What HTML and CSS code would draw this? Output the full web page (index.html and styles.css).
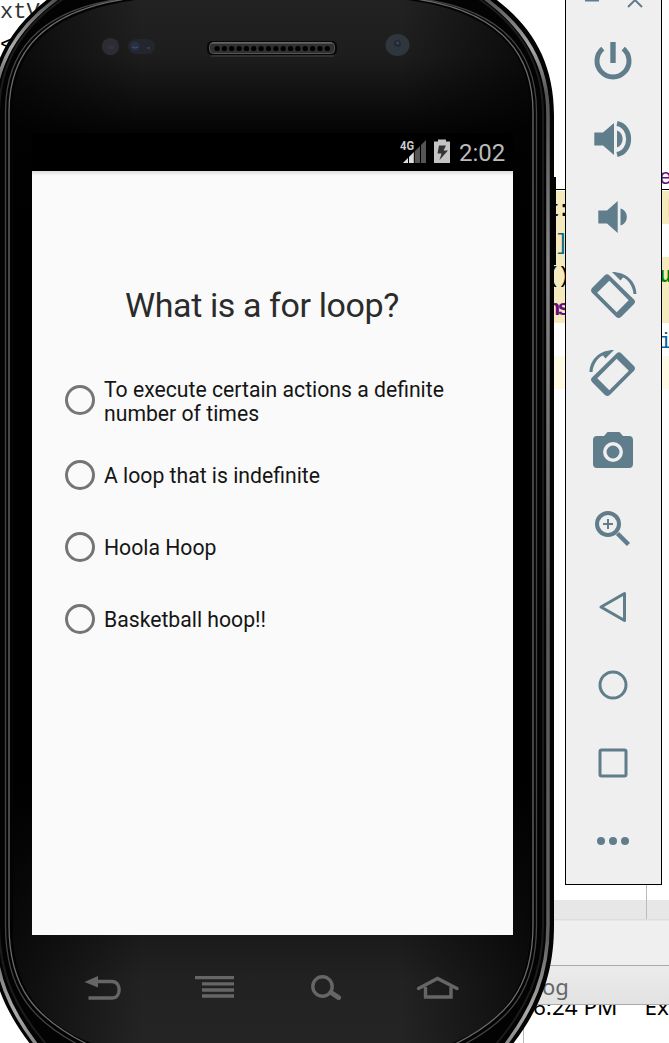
FILE: index.html
```
<!DOCTYPE html>
<html lang="en">
<head>
<meta charset="utf-8">
<title>Emulator</title>
<link rel="stylesheet" href="styles.css">
</head>
<body>
<div class="desktop">
  <div class="ide">
    <div class="editor">
      <div class="line first">xtV</div>
      <div class="line second">&lt;</div>
      <div class="line plain"></div>
      <div class="line plain"></div>
      <div class="line ruled"><span></span><span class="field tail">e.</span></div>
      <div class="line warn"><span>t:</span><span class="patch"></span></div>
      <div class="line warn split"><span class="bracket">]</span></div>
      <div class="line warn"><span>()</span><span class="string tail">u</span></div>
      <div class="line warn"><span class="keyword">ns</span></div>
      <div class="line"><span class="dot">.</span><span class="link tail">i</span></div>
      <div class="line current"></div>
    </div>
    <div class="gutter"><span></span></div>
    <div class="panel"></div>
    <div class="tabs">og</div>
    <div class="log"><div class="logtext"><span>6:24 PM</span><span>Exc</span></div></div>
  </div>

  <div class="phone">
    <svg class="shell" width="560" height="1043" viewBox="0 0 560 1043">
      <defs>
        <linearGradient id="face" x1="0" y1="0" x2="0" y2="1">
          <stop offset="0" stop-color="#222"/><stop offset=".055" stop-color="#1d1d1d"/>
          <stop offset=".125" stop-color="#050505"/><stop offset=".2" stop-color="#000"/>
          <stop offset=".75" stop-color="#000"/><stop offset=".88" stop-color="#171717"/><stop offset=".94" stop-color="#222"/><stop offset="1" stop-color="#242424"/>
        </linearGradient>
        <linearGradient id="shade" x1="0" y1="0" x2="1" y2="0">
          <stop offset="0" stop-color="#000"/><stop offset=".25" stop-color="#000" stop-opacity="0"/>
          <stop offset=".75" stop-color="#000" stop-opacity="0"/><stop offset="1" stop-color="#000"/>
        </linearGradient>
        <linearGradient id="rim" gradientUnits="userSpaceOnUse" x1="0" y1="0" x2="0" y2="1043">
          <stop offset="0" stop-color="#555"/><stop offset=".045" stop-color="#aaa"/><stop offset=".09" stop-color="#555"/>
          <stop offset=".25" stop-color="#888"/><stop offset=".6" stop-color="#5c5c5c"/><stop offset=".9" stop-color="#606060"/><stop offset=".97" stop-color="#aaa"/><stop offset="1" stop-color="#888"/>
        </linearGradient>
        <g id="side" fill="none">
          <path d="M483-3C525 27 548 64 548 115V925C548 973 534 1010 499 1053" stroke="url(#rim)" stroke-width="3.500"/>
          <path d="M476-3C519 25 543 62 543 115V925C543 972 528 1010 488 1053" stroke="#1c1c1c" stroke-width="2"/>
          <path d="M405-3C484 4 536.500 36 536.500 112V925C536.500 990 510 1022 457 1048" stroke="#444" stroke-width="1.300"/>
          <path d="M400-3C480 5 533 38 533 112V925C533 988 507 1019 451 1046" stroke="#6a6a6a" stroke-width="1.300"/>
        </g>
      </defs>
      <path d="M490-5C530 23 554 60 554 115V177H556V265H554V925C554 975 540 1012 504 1055H39C3 1012-11 975-11 925V115C-11 60 13 25 53-5Z" fill="#030303"/>
      <path d="M143-1C55 10 13 45 13 112V925C13 985 37 1022 94 1044H449C506 1022 530 985 530 925V112C530 45 488 10 400-1Z" fill="url(#face)"/>
      <path d="M143-1C55 10 13 45 13 112V925C13 985 37 1022 94 1044H449C506 1022 530 985 530 925V112C530 45 488 10 400-1Z" fill="url(#shade)" opacity=".65"/>
      <use href="#side"/>
      <use href="#side" transform="translate(542) scale(-1 1)"/>
      <circle cx="110.500" cy="46.500" r="8.700" fill="#2c2c31"/><ellipse cx="111" cy="47" rx="3.500" ry="2.500" fill="#303047"/>
      <rect x="128" y="39" width="27" height="15" rx="7.500" fill="#24262d"/><circle cx="135" cy="46" r="4.500" fill="#263047"/><path d="M132 47q3 2 6 0M147 48h3" stroke="#465168" fill="none"/>
      <rect x="207" y="41" width="130" height="14" rx="5" fill="#070707"/>
      <path d="M211 56H334" stroke="#444"/>
      <rect x="209.500" y="42.500" width="125" height="11" rx="4" fill="#303030" stroke="#555"/>
      <path d="M212 43H332" stroke="#777"/>
      <path d="M217 48.500H331" stroke="#000" stroke-width="5.200" stroke-linecap="round" stroke-dasharray=".1 7.250"/>
      <ellipse cx="397.500" cy="45" rx="12" ry="11" fill="#30363e"/><circle cx="397.500" cy="43.500" r="3.500" fill="#222a34"/><circle cx="397.500" cy="43" r="1.200" fill="#46505c"/>
      <g fill="none" stroke="#666" stroke-width="3.400">
        <path d="M97 981.500H112C121.500 981.500 121.500 998 112 998H88.500"/><path d="M84.500 982L98 976V987.500Z" fill="#666" stroke="none"/>
        <path d="M195 977.700H234M202 983.800H234M202 990H234M202 996H234" stroke-width="3.300"/>
        <circle cx="322.500" cy="986.500" r="9.700"/><path d="M331 992.500L338.500 997.500" stroke-width="5" stroke-linecap="round"/>
        <path d="M418.500 988.500L437.500 978.500L457 988.500" stroke-linecap="round"/><path d="M425.500 987V997H451V987"/>
      </g>
    </svg>
    <div class="screen">
      <div class="status">
        <svg width="52" height="30" viewBox="0 0 52 30">
          <text class="network" x="0" y="13" textLength="14" lengthAdjust="spacingAndGlyphs">4G</text>
          <path d="M3 26L26 3V26Z" fill="#555"/><path d="M3 26L14 15V26Z" fill="#ddd"/><path d="M8.500 16V26M14.300 12V26M20.500 7V26" stroke="#000"/>
          <path d="M34 4.500H38V2.500H46V4.500H50V26H34Z" fill="#c4c4c4"/><path d="M39 8.500H46L43.500 13.500H48L39.500 23L41.500 16.500H37.500Z" fill="#333"/>
        </svg>
        <span class="clock">2:02</span>
      </div>
      <div class="quiz">
        <h1 class="question">What is a for loop?</h1>
        <div class="option two"><span class="radio"></span><span class="label">To execute certain actions a definite<br>number of times</span></div>
        <div class="option"><span class="radio"></span><span class="label">A loop that is indefinite</span></div>
        <div class="option"><span class="radio"></span><span class="label">Hoola Hoop</span></div>
        <div class="option"><span class="radio"></span><span class="label">Basketball hoop!!</span></div>
      </div>
    </div>
  </div>

  <div class="toolbar">
    <svg class="caption" width="95" height="22" viewBox="0 0 95 22"><path d="M19 .5H33M62 7L69 0L76 7" fill="none" stroke="#607d8b" stroke-width="2"/></svg>
    <div class="tool"><svg viewBox="0 0 48 48"><path d="M13.800 11.600A16 16 0 1 0 34.200 11.600" fill="none" stroke="#607d8b" stroke-width="5"/><path d="M21.300 5h5.400v21h-5.400z"/></svg></div>
    <div class="tool"><svg viewBox="0 0 48 48"><path d="M5.300 17.500H14L25 8V40L14 30.500H5.300ZM28 15.500C35.500 18 35.500 30 28 32.500Z"/><path d="M28 8.500C43.500 11.500 43.500 36.500 28 39.500" fill="none" stroke="#607d8b" stroke-width="5"/></svg></div>
    <div class="tool"><svg viewBox="0 0 48 48"><path d="M9.300 17.500H18L28.700 8V40L18 30.500H9.300ZM31.500 15.500C40 18 40 30 31.500 32.500Z"/></svg></div>
    <div class="tool"><svg viewBox="0 0 48 48"><g id="turn"><path fill-rule="evenodd" d="M15.500 4.500Q18 2.200 20.500 4.500L45 28.500Q47 30.700 45 33L32 46Q29.700 48 27.200 46L3 21.700Q1 19.500 3 17ZM20.300 9.700L8.200 21.800L27.700 41.200L39.700 29.200Z"/><path d="M23 1C37 1 47 10 47.500 23H44.500C44 15 38.500 8 34 6.500L31.500 9.500Z"/></g></svg></div>
    <div class="tool"><svg viewBox="0 0 48 48"><use href="#turn" transform="translate(48) scale(-1 1)"/></svg></div>
    <div class="tool"><svg viewBox="0 0 48 48"><path d="M8 9H15L18.500 5H30.500L34 9H40Q44 9 44 13V37Q44 41 40 41H8Q4 41 4 37V13Q4 9 8 9Z"/><circle cx="24" cy="25" r="8.200" fill="#607d8b" stroke="#efefef" stroke-width="3.500"/></svg></div>
    <div class="tool"><svg viewBox="0 0 48 48"><g fill="none" stroke="#607d8b"><circle cx="19" cy="19" r="11" stroke-width="4"/><path d="M14 19H24M19 14V24" stroke-width="2"/><path d="M28.500 28.500L39.500 39.500" stroke-width="4.500"/></g></svg></div>
    <div class="tool"><svg viewBox="0 0 48 48"><path d="M35.500 10.500V37.500L12 24Z" fill="none" stroke="#607d8b" stroke-width="3" stroke-linejoin="round"/></svg></div>
    <div class="tool"><svg viewBox="0 0 48 48"><circle cx="24" cy="24" r="13" fill="none" stroke="#607d8b" stroke-width="3"/></svg></div>
    <div class="tool"><svg viewBox="0 0 48 48"><rect x="11" y="11" width="26" height="26" rx="1.500" fill="none" stroke="#607d8b" stroke-width="3"/></svg></div>
    <div class="tool"><svg viewBox="0 0 48 48"><circle cx="12" cy="24" r="4"/><circle cx="24" cy="24" r="4"/><circle cx="36" cy="24" r="4"/></svg></div>
  </div>
</div>
</body>
</html>
```

FILE: styles.css
```
* { box-sizing: border-box; }
body { margin: 0; background: #fff; }
.desktop { position: relative; width: 669px; height: 1043px; overflow: hidden; background: #fff; }

/* Editor behind the emulator */
.ide { display: flex; flex-direction: column; height: 1043px; }
.editor { height: 900px; display: flex; flex-direction: column; font: 22px/39px "Liberation Mono", monospace; color: #000; }
.line { height: 33px; flex: none; display: flex; padding-left: 547px; overflow: hidden; white-space: pre; }
.line > span:first-child { width: 112px; flex: none; letter-spacing: -3px; }
.line.first { height: 26px; padding-left: 0; line-height: 25px; color: #333; }
.line.second { padding-left: 0; }
.line.ruled { margin-top: 33px; border-bottom: 1px solid #000; height: 32px; line-height: 42px; margin-bottom: 1px; }
.line.warn { background: #f5e9be; }
.line.split { background: linear-gradient(90deg, #f5e9be 600px, #fff 600px); }
.line.current { background: #fffae3; }
.line > .bracket { color: #05668d; padding-left: 8px; }
.line > .dot { padding-left: 14px; color: #822; }
.field { color: #660e7a; }
.string { color: #008000; font-weight: bold; }
.keyword { color: #660e7a; font-weight: bold; }
.link { color: #0066a1; height: 25px; border-bottom: 1px solid #000; width: 14px; }
.tail { flex: none; }
.patch { margin-left: 9px; width: 3px; height: 18px; margin-top: 8px; background: #f3dda0; }
.gutter { height: 20px; background: #e7e7e7; border-bottom: 1px solid #ddd; padding-left: 646px; }
.gutter span { display: block; width: 1px; height: 34px; margin-top: -15px; background: #bbb; }
.panel { height: 45px; background: #efefef; border-top: 1px solid #e7e7e7; }
.tabs { height: 40px; margin-left: 300px; border: solid #aaa; border-width: 1px 0; background: linear-gradient(#ececec, #e2e2e2); padding-left: 242px; font: 22px/40px "Noto Sans", sans-serif; color: #666; }
.log { height: 38px; padding-left: 523px; background: #fff; overflow: hidden; }
.logtext { display: flex; gap: 27px; height: 38px; border-left: 1px solid #bbb; padding-left: 9px; font: 22.5px/30px "Noto Sans", sans-serif; white-space: nowrap; }
.logtext span { margin-top: -13px; }

/* Emulator window */
.phone { position: absolute; left: 0; top: 0; width: 560px; height: 1043px; padding: 133px 0 0 32px; }
.shell { position: absolute; left: 0; top: 0; }
.screen { position: relative; width: 481px; height: 802px; display: flex; flex-direction: column; background: #fafafa; font-family: Roboto, sans-serif; }
.status { height: 38px; background: #000; display: flex; justify-content: flex-end; gap: 7px; padding: 4px 9px 0 0; flex: none; }
.network { font: bold 12px Roboto, sans-serif; fill: #ccc; }
.clock { font-size: 24px; line-height: 32px; color: #bbb; width: 45px; white-space: nowrap; }
.quiz { flex: 1; padding: 112px 33px 0; background: linear-gradient(#ddd, #fafafa 5px); }
.question { margin: 0 0 0 60px; font-size: 34px; letter-spacing: -.4px; line-height: 44px; font-weight: 400; color: #2b2b2b; white-space: nowrap; }
.option { display: flex; align-items: center; gap: 9px; height: 72px; font-size: 21.2px; line-height: 24px; color: #151515; white-space: nowrap; }
.option.two { margin-top: 35px; height: 77px; padding-bottom: 2px; }
.label { padding-top: 2px; }
.two .label { padding-top: 4px; }
.radio { width: 30px; height: 30px; border: 3px solid #757575; border-radius: 50%; flex: none; }

/* Emulator controls */
.toolbar { position: absolute; left: 565px; top: -1px; width: 97px; height: 886px; background: #efefef; border: 1px solid #000; display: flex; flex-direction: column; }
.caption { display: block; flex: none; }
.tool { height: 78px; flex: none; display: flex; align-items: center; justify-content: center; padding-right: 1px; }
.tool svg { width: 48px; height: 48px; fill: #607d8b; overflow: visible; }
```
